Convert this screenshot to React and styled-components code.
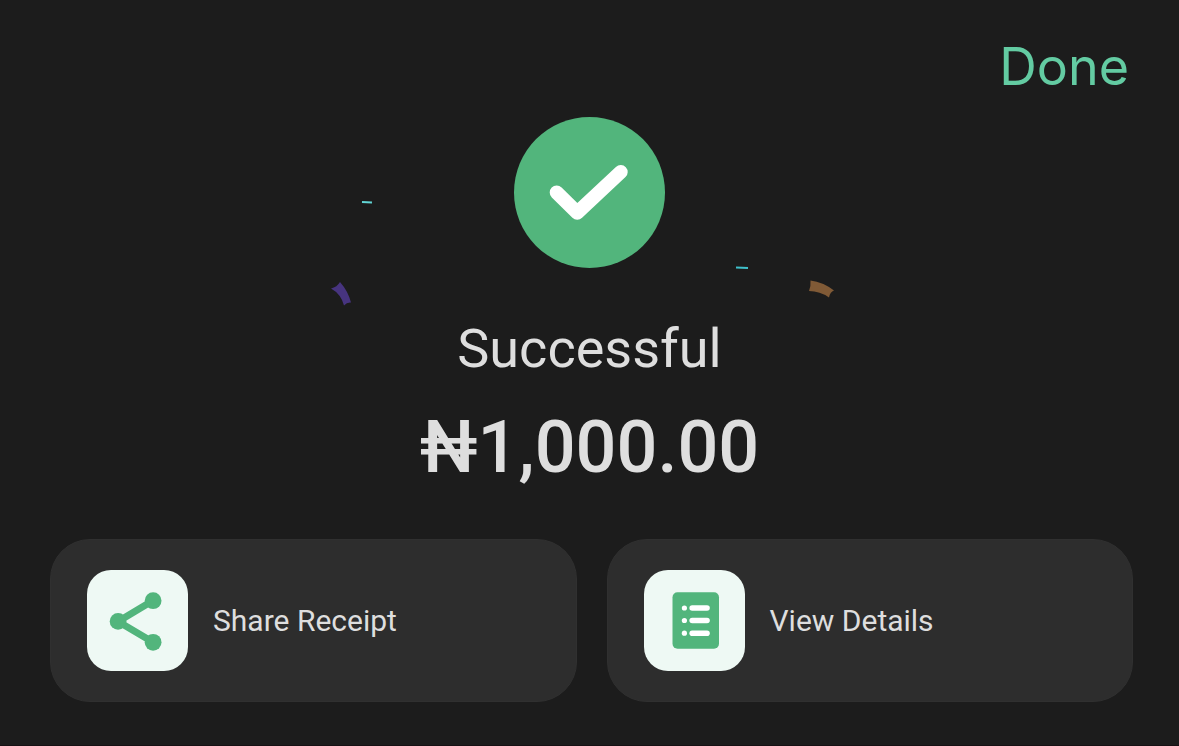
import React from "react";
import styled, { createGlobalStyle } from "styled-components";

const GlobalStyle = createGlobalStyle`
  * {
    box-sizing: border-box;
  }

  body {
    margin: 0;
    background-color: #1c1c1c;
    font-family: Roboto, "Liberation Sans", sans-serif;
    color: #dedede;
  }
`;

const Page = styled.div`
  display: flex;
  flex-direction: column;
  min-height: 100vh;
  border-bottom: 1px solid #171114;
`;

const TopBar = styled.header`
  display: flex;
  justify-content: flex-end;
  padding: 35px 50px 0;
`;

const DoneButton = styled.button`
  padding: 0;
  border: none;
  background: none;
  color: #63cba2;
  font-family: Inter, "Liberation Sans", sans-serif;
  font-size: 52px;
  font-weight: 400;
  line-height: 64px;
  cursor: pointer;
`;

const Result = styled.main`
  position: relative;
  display: flex;
  flex-direction: column;
  align-items: center;
  padding-top: 18px;
`;

const Confetti = styled.svg`
  position: absolute;
  top: 78px;
  left: 50%;
  width: 520px;
  height: 140px;
  margin-left: -260px;
  pointer-events: none;
`;

const SuccessIcon = styled.svg`
  width: 151px;
  height: 151px;
`;

const Status = styled.h1`
  margin: 49px 0 0;
  font-size: 54px;
  font-weight: 400;
  line-height: 64px;
`;

const Amount = styled.p`
  margin: 25px 0 0;
  font-size: 72px;
  font-weight: 500;
  line-height: 84px;
`;

const Actions = styled.div`
  display: grid;
  grid-template-columns: 1fr 1fr;
  gap: 30px;
  padding: 49px 46px 42px 50px;
`;

const ActionCard = styled.button`
  display: flex;
  align-items: center;
  gap: 25px;
  padding: 30px 36px;
  border: 1px solid #303030;
  border-radius: 40px;
  background-color: #2d2d2d;
  color: #dedede;
  font-family: inherit;
  font-size: 30px;
  line-height: 36px;
  text-align: left;
  cursor: pointer;
`;

const ActionIcon = styled.svg`
  flex: none;
  width: 101px;
  height: 101px;
  border-radius: 24px;
  background-color: #eef9f4;
`;

const ShareIcon = () => (
  <ActionIcon viewBox="0 0 101 101" fill="#52b57c" aria-hidden="true">
    <path
      d="M66.1 30.6 31.1 51.4l35 20.9"
      fill="none"
      stroke="#52b57c"
      strokeWidth="7"
    />
    <circle cx="31.1" cy="51.4" r="8.4" />
    <circle cx="66.1" cy="30.7" r="8.4" />
    <circle cx="66.1" cy="72.3" r="8.4" />
  </ActionIcon>
);

const DetailsIcon = () => (
  <ActionIcon viewBox="0 0 101 101" aria-hidden="true">
    <rect x="28.5" y="22.2" width="46.5" height="56.5" rx="5" fill="#52b57c" />
    {[38, 50.5, 63.2].map((y) => (
      <g key={y} fill="#fff">
        <circle cx="40.4" cy={y} r="2.6" />
        <rect x="45.4" y={y - 2.8} width="20.4" height="5.6" rx="2.8" />
      </g>
    ))}
  </ActionIcon>
);

const App = () => {
  return (
    <Page>
      <GlobalStyle />
      <TopBar>
        <DoneButton type="button">Done</DoneButton>
      </TopBar>
      <Result>
        <Confetti viewBox="0 0 520 140" aria-hidden="true">
          <path d="M32 25l10 .5" stroke="#62d5d5" strokeWidth="2" />
          <path d="M406 90.4l12 .5" stroke="#3fc0cb" strokeWidth="2" />
          <path
            d="M1 111.5Q7 110 10 105Q18 114 21 125.5Q17 125 14 128.5Q11 117 1 111.5Z"
            fill="#47347f"
          />
          <path
            d="M480.5 103.5Q493 105 504 113.5Q500 115 499 120.5Q490 114 479 114Q481 109 480.5 103.5Z"
            fill="#805a36"
          />
        </Confetti>
        <SuccessIcon viewBox="0 0 151 151" aria-hidden="true">
          <circle cx="75.5" cy="75.5" r="75.5" fill="#52b57c" />
          <path
            d="M42.7 75.5 63.3 95.7 106.7 55"
            fill="none"
            stroke="#fff"
            strokeWidth="14"
            strokeLinecap="round"
            strokeLinejoin="round"
          />
        </SuccessIcon>
        <Status>Successful</Status>
        <Amount>₦1,000.00</Amount>
      </Result>
      <Actions>
        <ActionCard type="button">
          <ShareIcon />
          Share Receipt
        </ActionCard>
        <ActionCard type="button">
          <DetailsIcon />
          View Details
        </ActionCard>
      </Actions>
    </Page>
  );
};

export default App;
